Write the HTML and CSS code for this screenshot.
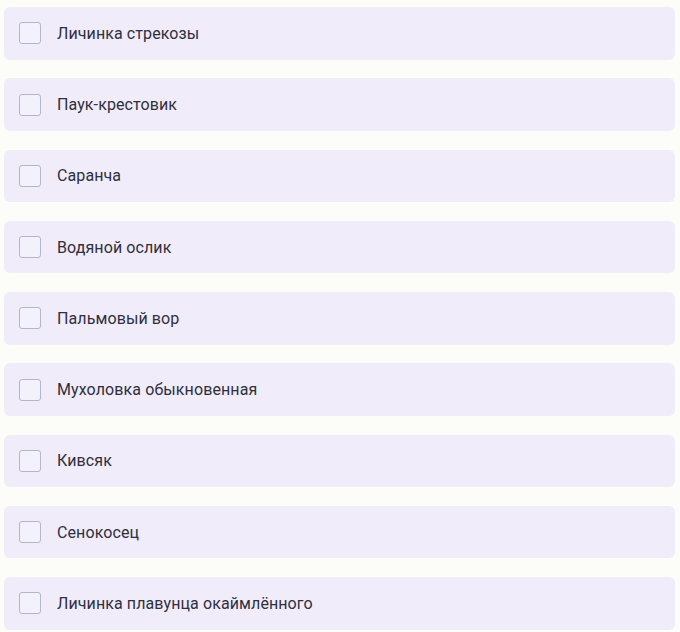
FILE: index.html
```html
<!DOCTYPE html>
<html lang="ru">
<head>
<meta charset="utf-8">
<link rel="stylesheet" href="styles.css">
</head>
<body>
<ul class="list">
  <li class="item"><span class="box"></span><span class="label">Личинка стрекозы</span></li>
  <li class="item"><span class="box"></span><span class="label">Паук-крестовик</span></li>
  <li class="item"><span class="box"></span><span class="label">Саранча</span></li>
  <li class="item"><span class="box"></span><span class="label">Водяной ослик</span></li>
  <li class="item"><span class="box"></span><span class="label">Пальмовый вор</span></li>
  <li class="item"><span class="box"></span><span class="label">Мухоловка обыкновенная</span></li>
  <li class="item"><span class="box"></span><span class="label">Кивсяк</span></li>
  <li class="item"><span class="box"></span><span class="label">Сенокосец</span></li>
  <li class="item"><span class="box"></span><span class="label">Личинка плавунца окаймлённого</span></li>
</ul>
</body>
</html>
```
FILE: styles.css
```css
html, body {
  margin: 0;
  padding: 0;
  background: #fcfcf8;
}
body {
  font-family: "Roboto", "Open Sans", sans-serif;
}
.list {
  list-style: none;
  margin: 0;
  padding: 7px 5px 0 4px;
  display: flex;
  flex-direction: column;
  gap: 18.75px;
}
.item {
  height: 52.5px;
  box-sizing: border-box;
  background: #f0ecfa;
  border-radius: 6px;
  display: flex;
  align-items: center;
  padding-left: 15px;
}
.box {
  width: 22px;
  height: 22px;
  box-sizing: border-box;
  border: 1.5px solid #b3b6c6;
  border-radius: 3px;
  background: #f3f1fb;
  flex: none;
}
.label {
  margin-left: 16px;
  font-size: 16px;
  color: #2f2f3d;
  letter-spacing: 0.1px;
}
```
